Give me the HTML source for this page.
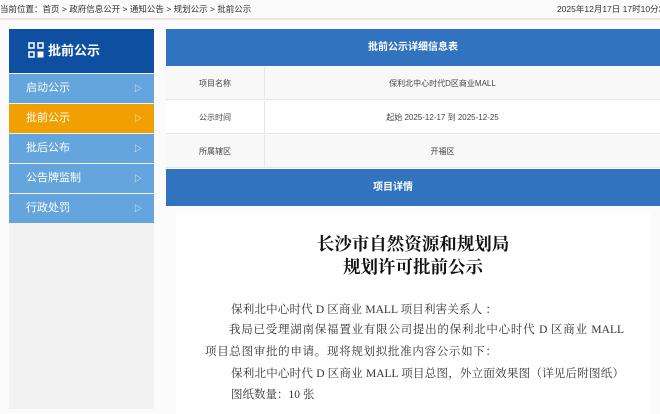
<!DOCTYPE html>
<html><head><meta charset="utf-8"><style>
*{margin:0;padding:0;box-sizing:border-box}
body{width:660px;height:403px;overflow:hidden;background:#fbfbfb;font-family:"Liberation Sans","Noto Sans CJK SC",sans-serif;position:relative}
.a{position:absolute}
.crumb{left:0;top:3px;font-size:8.5px;color:#333;white-space:nowrap}
.time{right:-8px;top:3px;font-size:8.5px;color:#333;white-space:nowrap}
.line{left:0;top:18px;width:660px;height:2px;background:#f0e4e0}
.side{left:9px;top:29px;width:145px;height:380px;background:#f2f2f2}
.sh{left:9px;top:29px;width:145px;height:44px;background:#0e4fa1;color:#fff;font-size:13px;font-weight:bold;line-height:44px;padding-left:19px}
.it{left:9px;width:145px;height:29px;background:#63a5dc;color:#fff;font-size:11px;line-height:29px;padding-left:17px}
.it span{position:absolute;right:12px;top:0;font-size:8px}
.hd{left:166px;width:494px;background:#3273bf;color:#fff;font-weight:bold;font-size:10px;text-align:center}
.row{left:166px;width:494px;height:33px;border-bottom:1px solid #e6e6e6;font-size:8px;color:#444;line-height:33px}
.row .l{position:absolute;left:0;width:99px;text-align:center;border-right:1px solid #e6e6e6;height:33px}
.row .r{position:absolute;left:99px;right:0;text-align:center;padding-right:40px}
.card{left:176px;top:214px;width:474px;height:200px;background:#fff}
.serif{font-family:"Liberation Serif","Noto Serif CJK SC",serif;color:#222}
.t{left:166px;width:494px;text-align:center;font-size:17.5px;font-weight:bold;color:#111}
.p{font-size:11.5px;white-space:nowrap;color:#333;text-align:justify;text-align-last:justify;height:18px}
</style></head><body>
<div class="a crumb">当前位置：首页 &gt; 政府信息公开 &gt; 通知公告 &gt; 规划公示 &gt; 批前公示</div>
<div class="a time">2025年12月17日 17时10分38</div>
<div class="a line"></div>
<div class="a side"></div>
<div class="a sh"><svg width="16" height="16" viewBox="0 0 16 16" style="vertical-align:-3px;margin-right:4px"><g fill="none" stroke="#fff" stroke-width="1.5"><rect x="1" y="1" width="5" height="5"/><rect x="10" y="1" width="5" height="5"/><rect x="1" y="10" width="5" height="5"/></g><rect x="9.5" y="9.5" width="6" height="6" fill="#fff"/></svg>批前公示</div>
<div class="a it" style="top:74px">启动公示<span>▷</span></div>
<div class="a it" style="top:104px;background:#f0a000">批前公示<span>▷</span></div>
<div class="a it" style="top:134px">批后公布<span>▷</span></div>
<div class="a it" style="top:164px">公告牌监制<span>▷</span></div>
<div class="a it" style="top:194px">行政处罚<span>▷</span></div>
<div class="a hd" style="top:29px;height:37px;line-height:37px">批前公示详细信息表</div>
<div class="a row" style="top:67px;background:#f8f8f8"><div class="l">项目名称</div><div class="r">保利北中心时代D区商业MALL</div></div>
<div class="a row" style="top:101px;background:#fff"><div class="l">公示时间</div><div class="r">起始 2025-12-17 到 2025-12-25</div></div>
<div class="a row" style="top:135px;background:#f8f8f8"><div class="l">所属辖区</div><div class="r">开福区</div></div>
<div class="a hd" style="top:169px;height:37px;line-height:37px;padding-right:40px">项目详情</div>
<div class="a card"></div>
<div class="a t serif" style="top:231px">长沙市自然资源和规划局</div>
<div class="a t serif" style="top:254px">规划许可批前公示</div>
<div class="a p serif" style="left:231px;top:301px;width:266px">保利北中心时代 D 区商业 MALL 项目利害关系人 ：</div>
<div class="a p serif" style="left:229px;top:321px;width:395px">我局已受理湖南保福置业有限公司提出的保利北中心时代 D 区商业 MALL</div>
<div class="a p serif" style="left:205px;top:343px;width:292px">项目总图审批的申请。现将规划拟批准内容公示如下：</div>
<div class="a p serif" style="left:231px;top:365px;width:393px">保利北中心时代 D 区商业 MALL 项目总图，外立面效果图（详见后附图纸）</div>
<div class="a p serif" style="left:231px;top:386px;width:72px">图纸数量：10 张</div>
</body></html>
